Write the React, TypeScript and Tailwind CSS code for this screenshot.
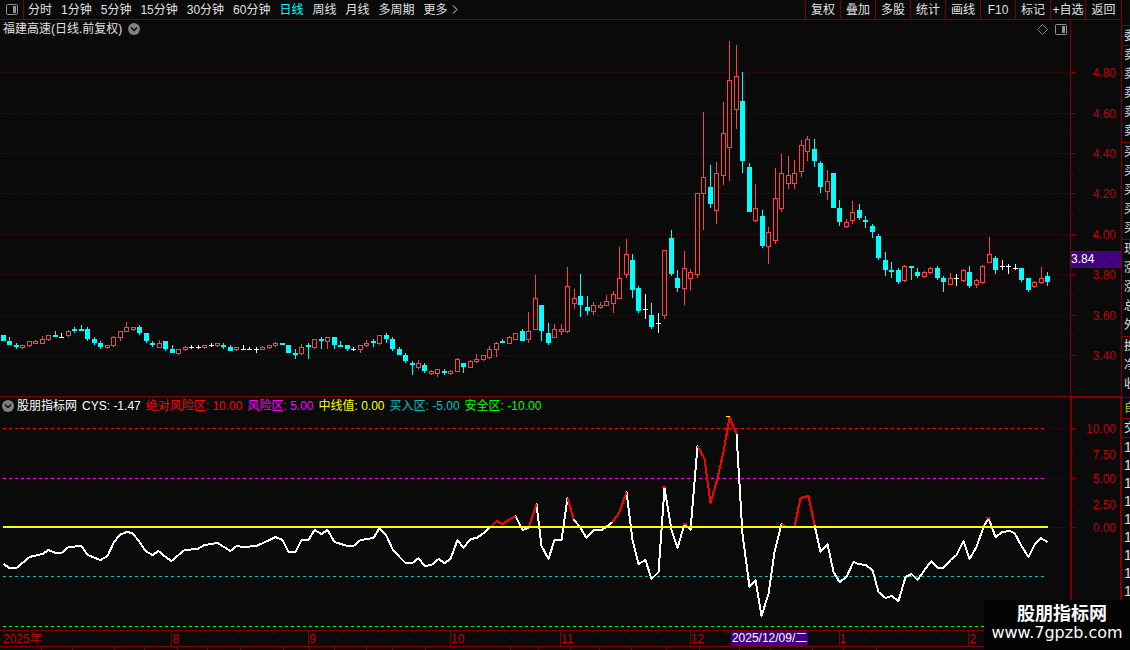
import React from 'react';

// u = up (hollow red), d = down (solid cyan), f = flat (white cross)
// [kind, high, body top, body bottom, low] on the price canvas
type Candle = ['u' | 'd' | 'f', number, number, number, number];

const CANDLES: Candle[] = [
  ['d', 335, 335, 341, 341], ['d', 337, 341, 345, 345], ['d', 343, 345, 347, 349], ['u', 345, 345, 348, 349],
  ['u', 341, 341, 346, 347], ['u', 340, 341, 344, 344], ['u', 336, 339, 344, 344], ['u', 335, 335, 340, 341],
  ['d', 331, 335, 337, 337], ['f', 333, 337, 338, 338], ['u', 330, 331, 336, 337], ['d', 327, 329, 331, 333],
  ['d', 325, 329, 331, 331], ['d', 327, 329, 339, 341], ['d', 337, 339, 343, 345], ['d', 341, 343, 347, 349],
  ['u', 345, 345, 348, 349], ['u', 336, 337, 346, 347], ['u', 331, 331, 338, 341], ['u', 322, 327, 332, 332],
  ['u', 327, 327, 330, 331], ['d', 325, 327, 333, 335], ['d', 333, 333, 341, 343], ['d', 341, 343, 345, 347],
  ['u', 340, 343, 348, 348], ['d', 341, 341, 349, 351], ['d', 345, 349, 353, 353], ['u', 349, 349, 354, 355],
  ['u', 346, 347, 350, 351], ['f', 345, 347, 348, 349], ['f', 345, 347, 348, 349], ['u', 345, 345, 348, 349],
  ['f', 343, 345, 346, 347], ['u', 343, 343, 346, 347], ['d', 343, 345, 347, 349], ['d', 345, 347, 351, 351],
  ['u', 347, 347, 350, 351], ['f', 345, 349, 350, 350], ['f', 347, 349, 350, 350], ['f', 347, 349, 350, 353],
  ['u', 346, 347, 350, 350], ['u', 345, 345, 348, 349], ['u', 342, 343, 346, 347], ['d', 343, 343, 345, 345],
  ['d', 345, 345, 353, 353], ['d', 349, 353, 355, 359], ['u', 344, 347, 354, 355], ['d', 343, 345, 347, 359],
  ['u', 339, 339, 348, 349], ['d', 337, 339, 341, 349], ['u', 337, 337, 342, 349], ['d', 337, 337, 345, 349],
  ['d', 341, 345, 347, 347], ['d', 345, 345, 349, 351], ['f', 347, 349, 350, 351], ['u', 345, 345, 350, 353],
  ['u', 340, 343, 346, 347], ['d', 339, 341, 343, 347], ['u', 335, 335, 344, 345], ['d', 333, 335, 339, 343],
  ['d', 337, 339, 349, 351], ['d', 347, 349, 355, 355], ['d', 353, 355, 361, 363], ['d', 361, 363, 365, 375],
  ['u', 360, 363, 368, 369], ['d', 363, 365, 371, 373], ['u', 370, 371, 374, 375], ['u', 369, 369, 374, 377],
  ['d', 369, 371, 373, 375], ['u', 370, 371, 374, 375], ['u', 358, 359, 372, 372], ['d', 363, 363, 367, 373],
  ['u', 360, 361, 368, 368], ['u', 354, 359, 362, 363], ['u', 355, 355, 360, 361], ['u', 346, 349, 358, 359],
  ['u', 342, 343, 350, 357], ['d', 339, 341, 343, 343], ['u', 336, 337, 344, 344], ['u', 333, 333, 340, 340],
  ['d', 329, 331, 341, 341], ['u', 312, 331, 340, 343], ['u', 275, 298, 330, 330], ['d', 305, 305, 331, 341],
  ['d', 323, 333, 343, 345], ['u', 324, 329, 338, 338], ['u', 324, 329, 332, 335], ['u', 267, 286, 332, 333],
  ['u', 289, 298, 304, 309], ['d', 274, 296, 305, 317], ['d', 296, 307, 311, 315], ['u', 302, 305, 312, 315],
  ['u', 302, 305, 308, 309], ['u', 295, 301, 306, 306], ['u', 291, 294, 304, 313], ['u', 247, 278, 299, 299],
  ['u', 239, 254, 275, 278], ['d', 254, 260, 290, 298], ['d', 286, 288, 311, 313], ['f', 294, 309, 310, 319],
  ['d', 303, 315, 327, 329], ['f', 313, 323, 324, 333], ['u', 250, 250, 316, 319], ['d', 230, 238, 274, 276],
  ['d', 270, 278, 288, 292], ['u', 251, 268, 289, 305], ['u', 269, 272, 279, 290], ['u', 193, 193, 275, 278],
  ['u', 112, 177, 194, 230], ['d', 165, 187, 204, 208], ['u', 162, 173, 211, 224], ['u', 102, 133, 176, 185],
  ['u', 41, 80, 148, 181], ['u', 45, 76, 110, 129], ['d', 72, 101, 161, 173], ['d', 163, 167, 212, 212],
  ['u', 184, 208, 221, 222], ['d', 210, 216, 246, 248], ['u', 227, 232, 247, 264], ['u', 168, 198, 241, 244],
  ['u', 154, 173, 209, 212], ['u', 156, 175, 184, 189], ['u', 160, 173, 184, 189], ['u', 140, 145, 172, 177],
  ['u', 136, 139, 152, 161], ['d', 139, 149, 161, 167], ['d', 161, 163, 187, 193], ['u', 170, 181, 192, 200],
  ['d', 173, 173, 208, 208], ['d', 200, 208, 222, 226], ['u', 219, 222, 227, 228], ['u', 201, 212, 221, 224],
  ['d', 204, 210, 218, 220], ['d', 216, 220, 222, 228], ['d', 224, 226, 232, 238], ['d', 234, 236, 258, 260],
  ['d', 252, 260, 270, 276], ['d', 262, 270, 272, 278], ['d', 268, 270, 282, 284], ['u', 265, 266, 281, 282],
  ['d', 266, 266, 268, 280], ['d', 268, 272, 276, 278], ['u', 271, 272, 277, 278], ['u', 267, 268, 273, 274],
  ['d', 266, 268, 278, 280], ['d', 276, 278, 282, 292], ['u', 273, 278, 285, 285], ['f', 274, 278, 279, 286],
  ['u', 269, 270, 281, 282], ['d', 266, 272, 286, 288], ['u', 279, 280, 285, 288], ['u', 265, 266, 283, 284],
  ['u', 237, 254, 263, 263], ['d', 256, 258, 270, 274], ['f', 260, 266, 267, 270], ['f', 264, 266, 267, 274],
  ['f', 264, 268, 269, 270], ['d', 268, 268, 280, 282], ['d', 278, 278, 290, 292], ['u', 281, 282, 287, 288],
  ['u', 267, 278, 283, 284], ['d', 272, 276, 282, 286],
];

const CANDLE_STEP = 1044 / 161;

const CYS_LINE =
  '3,564 9,568 16,568 29,557 42,554 48,550 55,553 61,553 68,547 81,546 87,555 100,560 107,556 113,543 119,535 126,532 132,533 139,542 145,551 152,555 158,551 165,557 171,561 178,555 184,550 197,549 204,545 217,543 230,551 236,546 243,547 256,546 269,540 275,537 282,540 288,552 295,552 301,540 308,540 314,530 321,534 327,530 334,542 347,546 353,546 360,540 373,538 379,528 386,536 392,549 399,557 405,563 412,563 418,558 424,566 431,565 438,559 444,563 450,559 457,540 463,548 470,539 476,538 482,534 489,528 496,521 502,524 508,520 515,516 522,530 528,528 536,504 541,546 548,559 554,540 561,540 567,498 573,519 580,528 586,538 593,530 601,530 607,526 612,522 619,512 626,492 632,540 638,564 645,560 651,579 658,572 664,488 671,530 677,548 684,524 690,530 697,446 704,459 710,503 717,478 723,452 729,417 736,434 742,534 749,587 755,580 761,616 768,594 774,552 781,524 786,527 794,527 800,498 808,496 814,525 820,552 827,544 833,572 839,582 846,577 853,562 858,564 865,565 872,570 878,592 885,598 891,596 898,601 905,577 911,574 917,580 924,570 931,561 937,568 943,568 950,560 956,555 963,541 969,559 976,547 983,527 988,518 995,537 1002,532 1009,531 1014,533 1021,546 1028,557 1034,545 1040,538 1047,542';

// stretches drawn over the white line while the reading is hot
const CYS_HOT = [
  '489,528 496,521 502,524 508,520 515,516',
  '528,528 536,504',
  '567,498 573,519',
  '612,522 619,512 626,492',
  '661,487 665,487',
  '682,524 686,524',
  '697,446 704,459 710,503 717,478 723,452 729,417 736,434',
  '781,524 786,527 794,527 800,498 808,496 814,525',
  '985,518 989,518',
];

const PRICE_TICKS = [
  { label: '4.80', y: 72 }, { label: '4.60', y: 113 }, { label: '4.40', y: 153 }, { label: '4.20', y: 193 },
  { label: '4.00', y: 234 }, { label: '3.80', y: 274 }, { label: '3.60', y: 315 }, { label: '3.40', y: 355 },
];
const PRICE_MINOR = [93, 133, 174, 214, 254, 295, 335];

const CYS_TICKS = [
  { label: '10.00', y: 428, major: true },
  { label: '7.50', y: 454, major: false },
  { label: '5.00', y: 478, major: true },
  { label: '2.50', y: 504, major: false },
  { label: '0.00', y: 527, major: true },
];

const LEVELS = [
  { y: 428, color: '#ff0000' },
  { y: 478, color: '#ff00ff' },
  { y: 576, color: '#00c0c0' },
  { y: 626, color: '#00ff00' },
];

const MONTHS = [
  { label: '2025年', span: 170 }, { label: '8', span: 137 }, { label: '9', span: 142 }, { label: '10', span: 110 },
  { label: '11', span: 130 }, { label: '12', span: 149 }, { label: '1', span: 130 }, { label: '2', span: 153 },
];
const WEEK_TICKS = [204, 239, 273, 343, 378, 414, 477, 504, 532, 592, 624, 657, 726, 765, 871, 903, 936];

const PERIODS = ['分时', '1分钟', '5分钟', '15分钟', '30分钟', '60分钟', '日线', '周线', '月线', '多周期'];
const ACTIONS = ['复权', '叠加', '多股', '统计', '画线', 'F10', '标记', '+自选'];

const READINGS = [
  { name: 'CYS:', value: '-1.47', cls: 'text-white' },
  { name: '绝对风险区:', value: '10.00', cls: 'text-[#ff0000]' },
  { name: '风险区:', value: '5.00', cls: 'text-[#ff00ff]' },
  { name: '中线值:', value: '0.00', cls: 'text-[#ffff00]' },
  { name: '买入区:', value: '-5.00', cls: 'text-[#00c0c0]' },
  { name: '安全区:', value: '-10.00', cls: 'text-[#00ff00]' },
];

// widths of the tab strip cells, only the strip's top edge is in view
const TABS = [
  42, 31, 42, 29, 33, 30, 32, 43, 26, 24, 32, 26, 32, 86, 28, 32, 28, 32, 35, 33, 39, 31, 42, 31, 32,
];

// the quote panel is docked past the edge, only its first column shows
const QUOTE_GROUPS = [
  { rows: ['委'], box: 'h-5 leading-5', cls: 'text-[#e0e0e0]' },
  { rows: ['卖', '卖', '卖', '卖', '卖'], box: 'h-[97px] leading-[19px]', cls: 'text-[#e0e0e0]' },
  { rows: ['买', '买', '买', '买', '买'], box: 'h-[97px] leading-[19px]', cls: 'text-[#e0e0e0]' },
  { rows: ['现', '涨', '涨', '总', '外'], box: 'h-[97px] leading-[19px]', cls: 'text-[#e0e0e0]' },
  { rows: ['换', '净', '收'], box: 'h-[61px] leading-[19px]', cls: 'text-[#e0e0e0]' },
  { rows: ['自'], box: 'h-[21px] leading-5', cls: 'text-[#c0c000]' },
  { rows: ['交'], box: 'h-[19px] leading-[18px]', cls: 'text-[#e0e0e0]' },
  { rows: ['1', '1', '1', '1', '1', '1', '1', '1', '1'], box: 'leading-[18px]', cls: 'text-[#e0e0e0] text-sm' },
];

const DropIcon = () => (
  <svg width="12" height="12" viewBox="0 0 12 12" aria-hidden="true">
    <circle cx="6" cy="6" r="6" fill="#808080" />
    <path d="M3 4.5 6 7.5 9 4.5" fill="none" stroke="#0a0a0a" strokeWidth="1.5" />
  </svg>
);

const PanelIcon = () => (
  <svg width="12" height="11" viewBox="0 0 12 11" aria-hidden="true">
    <rect x="0.5" y="0.5" width="11" height="10" rx="1" fill="none" stroke="#909090" />
    <rect x="7" y="2" width="3" height="7" fill="#909090" />
  </svg>
);

const CandleMark = ({ candle, x }: { candle: Candle; x: number }) => {
  const [kind, high, top, bottom, low] = candle;
  if (kind === 'u') {
    return (
      <g fill="#ff4040">
        {top > high && <rect x={x} y={high} width="1" height={top - high} />}
        {low > bottom && <rect x={x} y={bottom} width="1" height={low - bottom} />}
        <rect x={x - 1.5} y={top + 0.5} width="4" height={bottom - top - 1} fill="none" stroke="#ff4040" />
      </g>
    );
  }
  return (
    <g fill={kind === 'd' ? '#00ffff' : '#ffffff'}>
      <rect x={x} y={high} width="1" height={low - high} />
      <rect x={x - 2} y={top} width="5" height={bottom - top} />
    </g>
  );
};

const PricePanel = () => (
  <section className="flex">
    <div className="min-w-0 flex-1">
      <div className="flex h-[18px] items-center px-[3px] text-[#e0e0e0]">
        <h1>福建高速(日线.前复权)</h1>
        <button type="button" aria-label="切换复权" className="ml-[6px]">
          <DropIcon />
        </button>
        <button type="button" aria-label="标记" className="ml-auto mr-[7px]">
          <svg width="11" height="11" viewBox="0 0 11 11" aria-hidden="true">
            <path d="M5.5 0.5 10.5 5.5 5.5 10.5 0.5 5.5Z" fill="none" stroke="#808080" />
          </svg>
        </button>
        <button type="button" aria-label="侧栏">
          <PanelIcon />
        </button>
      </div>
      <svg
        className="block h-[358px] w-full"
        viewBox="0 38 1070 358"
        preserveAspectRatio="none"
        shapeRendering="crispEdges"
        role="img"
        aria-label="日K线"
      >
        {PRICE_TICKS.map(({ y }) => (
          <line key={y} x1="1" x2="1066" y1={y + 0.5} y2={y + 0.5} stroke="#800000" strokeDasharray="1 3" />
        ))}
        {CANDLES.map((c, i) => (
          <CandleMark key={i} candle={c} x={Math.round(3 + i * CANDLE_STEP)} />
        ))}
      </svg>
    </div>
    <div className="relative w-[51px] border-l border-[#800000]">
      <svg className="block" width="50" height="376" viewBox="0 20 50 376" shapeRendering="crispEdges">
        {PRICE_TICKS.map(({ label, y }) => (
          <g key={label}>
            <rect x="0" y={y} width="5" height="1" fill="#800000" />
            <text x="45" y={y + 5} textAnchor="end" fill="#c00000">{label}</text>
          </g>
        ))}
        {PRICE_MINOR.map((y) => (
          <rect key={y} x="0" y={y} width="2" height="1" fill="#800000" />
        ))}
      </svg>
      <span className="absolute left-0 top-[231px] h-[17px] w-full border-y border-[#800000] bg-[#400080] leading-[15px] text-white">
        3.84
      </span>
    </div>
  </section>
);

const CysPanel = () => (
  <section className="flex">
    <div className="min-w-0 flex-1 border-t border-[#800000]">
      <div className="flex h-[17px] items-center gap-[5px] pl-[2px]">
        <button type="button" aria-label="指标菜单" className="-mr-[2px]">
          <DropIcon />
        </button>
        <h2 className="text-white">股朋指标网</h2>
        {READINGS.map(({ name, value, cls }) => (
          <span key={name} className={cls}>
            {name} {value}
          </span>
        ))}
      </div>
      <svg
        className="block h-[216px] w-full"
        viewBox="0 414 1070 216"
        preserveAspectRatio="none"
        shapeRendering="crispEdges"
        role="img"
        aria-label="CYS"
      >
        {LEVELS.map(({ y, color }) => (
          <line key={y} x1="3" x2="1045" y1={y + 0.5} y2={y + 0.5} stroke={color} strokeDasharray="3 3" />
        ))}
        {[428, 478, 527].map((y) => (
          <line key={y} x1="1049" x2="1066" y1={y + 0.5} y2={y + 0.5} stroke="#800000" strokeDasharray="1 3" />
        ))}
        <g fill="none" strokeWidth="2" strokeLinejoin="round" transform="translate(0.5 0)">
          <polyline points={CYS_LINE} stroke="#ffffff" />
          {CYS_HOT.map((points) => (
            <polyline key={points} points={points} stroke="#ff0000" />
          ))}
        </g>
        <rect x="3" y="526" width="1045" height="2" fill="#ffff00" />
        <rect x="726" y="416" width="4" height="1" fill="#ffff00" />
      </svg>
    </div>
    <div className="w-[51px] border-l-2 border-r border-t-2 border-[#800000]">
      <svg className="block" width="48" height="232" viewBox="0 398 48 232" shapeRendering="crispEdges">
        {CYS_TICKS.map(({ label, y, major }) => (
          <g key={label}>
            <rect x="0" y={y} width={major ? 4 : 1} height="1" fill="#800000" />
            <text x="44" y={y + 5} textAnchor="end" fill="#c00000">{label}</text>
          </g>
        ))}
      </svg>
    </div>
  </section>
);

const TimeAxis = () => (
  <div className="relative flex h-4 border-t border-[#800000] leading-4 text-[#c00000]">
    {MONTHS.map(({ label, span }, i) => (
      <span
        key={label}
        className={i === 0 ? 'min-w-0 basis-0 pl-[3px]' : 'min-w-0 basis-0 border-l border-[#800000]'}
        style={{ flexGrow: span }}
      >
        {label}
      </span>
    ))}
    <svg
      className="absolute left-0 top-0 h-[2px] w-full"
      viewBox="0 0 1121 2"
      preserveAspectRatio="none"
      shapeRendering="crispEdges"
      aria-hidden="true"
    >
      {WEEK_TICKS.map((x) => (
        <rect key={x} x={x} y="0" width="1" height="2" fill="#800000" />
      ))}
    </svg>
    <time
      dateTime="2025-12-09"
      className="absolute left-[65.2%] top-0 h-[15px] whitespace-nowrap bg-[#400080] px-px leading-[15px] text-white"
    >
      2025/12/09/二
    </time>
  </div>
);

const App: React.FC = () => {
  return (
    <div className="relative flex min-h-screen overflow-hidden bg-[#0a0a0a] font-['Liberation_Sans','Noto_Sans_CJK_SC',sans-serif] text-xs">
      <main className="min-w-0 flex-1">
        <header className="flex h-5 border-b border-[#800000] text-[#e0e0e0]">
          <button type="button" aria-label="侧栏" className="flex w-6 items-center justify-center border-r border-[#800000] pb-px">
            <PanelIcon />
          </button>
          <nav className="flex items-center gap-[9px] whitespace-nowrap pl-1">
            {PERIODS.map((p) => (
              <button key={p} type="button" className={p === '日线' ? 'text-[#00ffff]' : undefined}>
                {p}
              </button>
            ))}
            <button type="button" className="flex items-center gap-1">
              更多
              <svg width="6" height="9" viewBox="0 0 6 9" aria-hidden="true">
                <path d="M1 0.5 5 4.5 1 8.5" fill="none" stroke="#e0e0e0" />
              </svg>
            </button>
          </nav>
          <div className="ml-auto flex whitespace-nowrap">
            {ACTIONS.map((a) => (
              <button key={a} type="button" className="w-[35px] border-l border-[#800000]">
                {a}
              </button>
            ))}
            <button type="button" className="w-9 border-l border-[#800000]">返回</button>
          </div>
        </header>

        <PricePanel />
        <CysPanel />
        <TimeAxis />

        <div className="flex h-1 border-t border-[#800000]">
          {TABS.map((span, i) => (
            <span key={i} className="min-w-0 basis-0 border-r border-[#800000]" style={{ flexGrow: span }} />
          ))}
          <span className="min-w-0 basis-0" style={{ flexGrow: 250 }} />
        </div>
      </main>

      <aside className="w-[9px] overflow-hidden border-l border-[#800000] pt-[25px]">
        {QUOTE_GROUPS.map(({ rows, box, cls }, g) => (
          <ul key={g} className={`border-t border-[#800000] pl-[2px] ${box} ${cls}`}>
            {rows.map((r, i) => (
              <li key={i} className="whitespace-nowrap">{r}</li>
            ))}
          </ul>
        ))}
      </aside>

      <div className="absolute bottom-0 right-0 flex h-[50px] w-[146px] flex-col items-center bg-[#030303] pt-[3px] text-white">
        <p className="pl-[10px] text-lg font-bold leading-[22px]">股朋指标网</p>
        <p className="font-['DejaVu_Sans',sans-serif] text-base leading-4">www.7gpzb.com</p>
      </div>
    </div>
  );
};

export default App;
